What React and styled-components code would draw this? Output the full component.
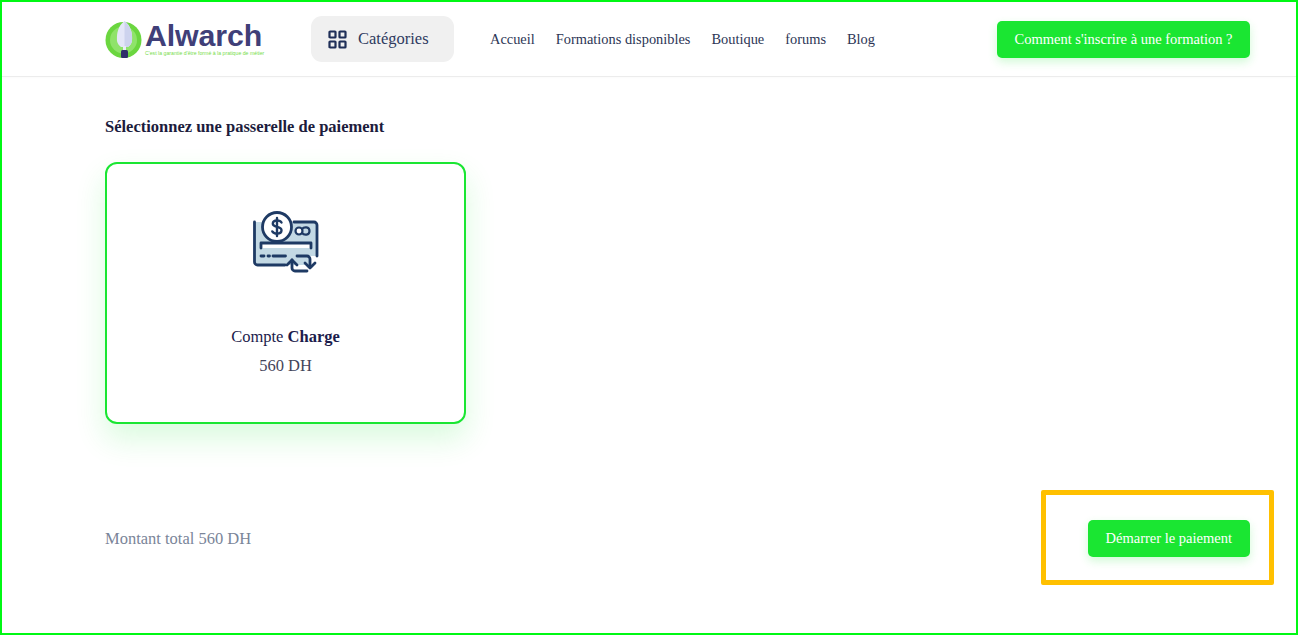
import React from 'react';
import styled, { createGlobalStyle } from 'styled-components';

const GlobalStyle = createGlobalStyle`
	html, body {
		margin: 0;
		padding: 0;
		background: #fff;
		font-family: "Liberation Serif", "Times New Roman", serif;
	}
	* {
		box-sizing: border-box;
	}
`;

const Frame = styled.div`
	position: relative;
	width: 1298px;
	height: 635px;
	border: 2px solid #00f814;
	overflow: hidden;
	background: #fff;
`;

const Header = styled.header`
	height: 75px;
	padding: 0 46px 0 103px;
	display: flex;
	align-items: center;
	background: #fff;
	border-bottom: 1px solid #ececec;
	box-shadow: 0 1px 3px rgba(0, 0, 0, 0.02);
`;

const Logo = styled.div`
	width: 160px;
	margin-right: 46px;
	display: flex;
	align-items: center;
	gap: 3px;
`;

const LogoWords = styled.div`
	display: flex;
	flex-direction: column;
`;

const LogoName = styled.span`
	font-family: "Liberation Sans", Arial, sans-serif;
	font-weight: 700;
	font-size: 30.3px;
	line-height: 28px;
	color: #403f78;
	letter-spacing: -0.1px;
`;

const LogoTag = styled.span`
	font-family: "Liberation Sans", Arial, sans-serif;
	font-size: 5.2px;
	line-height: 6px;
	color: #78dd4c;
	white-space: nowrap;
`;

const CategoryButton = styled.div`
	width: 143px;
	height: 46px;
	margin-right: 36px;
	border-radius: 11px;
	background: #f0f0f0;
	display: flex;
	align-items: center;
	gap: 11px;
	padding-left: 17px;
	font-size: 16.5px;
	color: #2e3a5f;
`;

const Nav = styled.nav`
	display: flex;
	gap: 21px;
	font-size: 14.4px;
	color: #2c3555;
`;

const GreenButton = styled.button`
	height: 37px;
	padding: 0 18px;
	border: 0;
	border-radius: 5px;
	background: #1ae632;
	color: #fff;
	font-family: inherit;
	font-size: 14.5px;
	box-shadow: 0 4px 10px rgba(26, 230, 50, 0.2);
	white-space: nowrap;
`;

const HeaderCta = styled(GreenButton)`
	margin-left: auto;
	width: 253px;
	padding: 0;
	margin-top: 1px;
`;

const Main = styled.main`
	padding: 41px 46px 0 103px;
`;

const Title = styled.h2`
	margin: 0 0 26px;
	font-size: 16.5px;
	line-height: 18px;
	font-weight: 700;
	color: #1c1c3c;
`;

const GatewayCard = styled.div`
	width: 361px;
	height: 262px;
	border: 2px solid #1ae632;
	border-radius: 12px;
	background: #fff;
	box-shadow: 0 15px 30px rgba(26, 230, 50, 0.16);
	display: flex;
	flex-direction: column;
	align-items: center;
	padding-top: 46px;
`;

const GatewayName = styled.div`
	margin-top: 53px;
	font-size: 16.5px;
	line-height: 20px;
	color: #1c1c4c;
`;

const GatewayPrice = styled.div`
	margin-top: 9px;
	font-size: 16.5px;
	line-height: 20px;
	color: #44445a;
`;

const Footer = styled.div`
	margin-top: 96px;
	display: flex;
	align-items: center;
	justify-content: space-between;
`;

const Total = styled.div`
	font-size: 16.5px;
	color: #7a8599;
`;

const Highlight = styled.div`
	position: absolute;
	left: 1039px;
	top: 488px;
	width: 233px;
	height: 95px;
	border: 5px solid #ffc000;
	border-radius: 2px;
	pointer-events: none;
`;

const ShovelLogo = () => (
	<svg width="37" height="40" viewBox="0 0 37 40" style={{ flexShrink: 0 }}>
		<circle cx="18.5" cy="21" r="18" fill="#6bd63f" />
		<circle cx="18.5" cy="21" r="13.5" fill="#8fe36a" />
		<path d="M19.5 2 C13 7 11.5 14 12 22 C12.5 25 14.5 27 16 28 L23 28 C24.5 27 26.5 25 27 22 C27.5 14 26 7 19.5 2Z" fill="#e4e7f8" />
		<path d="M19.5 2 C26 7 27.5 14 27 22 C26.5 25 24.5 27 23 28 L19.5 28Z" fill="#cdd3ee" />
		<rect x="18" y="27" width="3" height="5" fill="#e8ebf7" />
		<rect x="16" y="31" width="7" height="8" rx="1.5" fill="#2f2f6a" />
	</svg>
);

const GridIcon = () => (
	<svg width="19" height="19" viewBox="0 0 19 19" fill="none" stroke="#1f2f58" strokeWidth="2.2">
		<rect x="1.5" y="1.5" width="6" height="6" rx="0.6" />
		<rect x="11.5" y="1.5" width="6" height="6" rx="0.6" />
		<rect x="1.5" y="11.5" width="6" height="6" rx="0.6" />
		<rect x="11.5" y="11.5" width="6" height="6" rx="0.6" />
	</svg>
);

const ChequeIcon = () => (
	<svg width="68" height="64" viewBox="0 0 68 64" fill="none" stroke="#1e3a64" strokeWidth="2.8" strokeLinecap="round" strokeLinejoin="round">
		<path d="M3 12 H65 V46 H58 V55 H3Z" fill="#c3d9e4" stroke="none" />
		<path d="M2.5 12 V52 a3 3 0 0 0 3 3 H33" />
		<path d="M42 12 H62 a3 3 0 0 1 3 3 V46" />
		<circle cx="25" cy="17" r="14.5" fill="#fff" />
		<path d="M29.5 12.5 C28.5 10.8 26.8 10.5 25 10.5 C22.5 10.5 20.8 11.8 20.8 13.8 C20.8 18 29.5 15.8 29.5 20.3 C29.5 22.3 27.6 23.6 25 23.6 C23 23.6 21.2 23 20.3 21.4" strokeWidth="2.4" />
		<path d="M25 8 V26" strokeWidth="2.4" />
		<path d="M9 38 V33 H59 V38Z" fill="#fff" stroke="none" />
		<path d="M9 38 V33 H59 V38" />
		<path d="M9 46 H12 M16 46 H17.5 M21 46 H33.5" />
		<circle cx="47" cy="21" r="3.5" fill="#fff" strokeWidth="2.2" />
		<path d="M50 23 C52 25.5 57.5 25.5 57.5 21 C57.5 16.5 52 16.5 50 19" strokeWidth="2.2" />
		<path d="M45 46 H55 a3 3 0 0 1 3 3 V57" />
		<path d="M53 53 L58 58 L63 53" />
		<path d="M40 50 V58 a3 3 0 0 0 3 3 H55" />
		<path d="M35 55 L40 50 L45 55" />
	</svg>
);

const App = () => (
	<Frame>
		<GlobalStyle />
		<Header>
			<Logo>
				<ShovelLogo />
				<LogoWords>
					<LogoName>Alwarch</LogoName>
					<LogoTag>C'est la garantie d'être formé à la pratique de métier</LogoTag>
				</LogoWords>
			</Logo>
			<CategoryButton>
				<GridIcon />
				Catégories
			</CategoryButton>
			<Nav>
				<span>Accueil</span>
				<span>Formations disponibles</span>
				<span>Boutique</span>
				<span>forums</span>
				<span>Blog</span>
			</Nav>
			<HeaderCta>Comment s'inscrire à une formation ?</HeaderCta>
		</Header>
		<Main>
			<Title>Sélectionnez une passerelle de paiement</Title>
			<GatewayCard>
				<ChequeIcon />
				<GatewayName>Compte <b>Charge</b></GatewayName>
				<GatewayPrice>560 DH</GatewayPrice>
			</GatewayCard>
			<Footer>
				<Total>Montant total 560 DH</Total>
				<GreenButton>Démarrer le paiement</GreenButton>
			</Footer>
		</Main>
		<Highlight />
	</Frame>
);

export default App;
